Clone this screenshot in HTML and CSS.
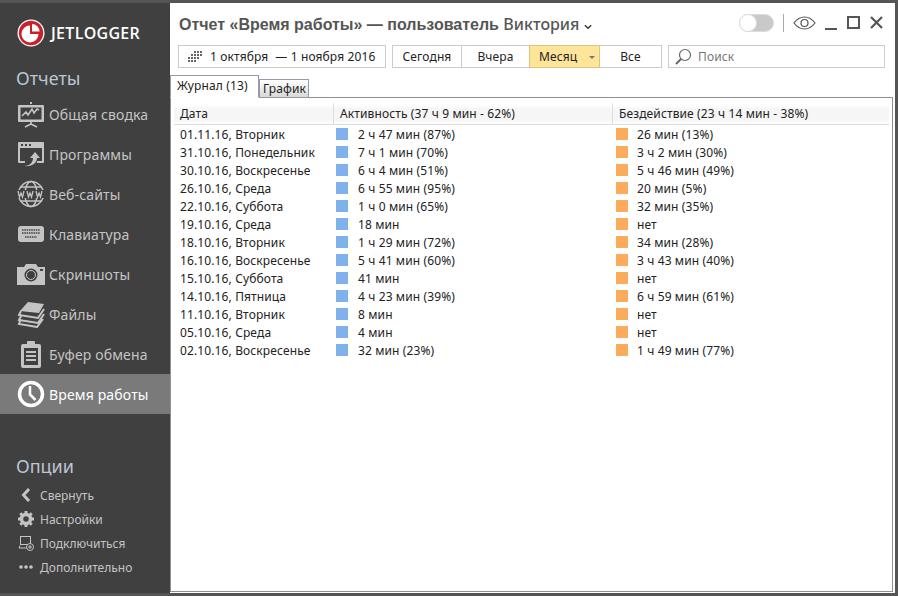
FILE: index.html
```html
<!DOCTYPE html>
<html lang="ru">
<head>
<meta charset="utf-8">
<title>JetLogger</title>
<link rel="stylesheet" href="styles.css">
</head>
<body>
<div class="app">
  <aside class="side">
    <div class="logo">
      <svg class="logo-mark" viewBox="0 0 28 28" width="28" height="28"><circle cx="14" cy="14" r="13.500" fill="#fff"/><circle cx="14" cy="14" r="12.200" fill="#c8202c"/><path d="M13 6.500v8.500h8.500a8.500 8.500 0 1 1-8.500-8.500z" fill="#fff"/><path d="M15 5v7.500h7.500A7.500 7.500 0 0 0 15 5z" fill="#fff"/></svg>
      <span class="logo-text">JETLOGGER</span>
    </div>
    <h2 class="side-h">Отчеты</h2>
    <nav class="nav">
      <a class="nav-item"><svg viewBox="0 0 28 28" width="28" height="28"><path d="M13 2h2v2h-2zM2 5h24a1 1 0 0 1 1 1v15a1 1 0 0 1-1 1H2a1 1 0 0 1-1-1V6a1 1 0 0 1 1-1z" fill="#c4c4c4"/><rect x="3.500" y="7.500" width="21" height="12" fill="#404040"/><path d="M5 16l4-4 2 3 4-6 2 4 3-4 2 1" stroke="#c4c4c4" stroke-width="1.600" fill="none"/><path d="M14 22v3M14 24l-6 3M14 24l6 3" stroke="#c4c4c4" stroke-width="1.600" fill="none"/></svg><span>Общая сводка</span></a>
      <a class="nav-item"><svg viewBox="0 0 28 28" width="28" height="28"><path d="M2 2h24a1 1 0 0 1 1 1v19a1 1 0 0 1-1 1h-6v-2h5V8H3v13h5v2H2a1 1 0 0 1-1-1V3a1 1 0 0 1 1-1z" fill="#c4c4c4"/><path d="M4 4h2v2H4zM8 4h2v2H8zM12 4h2v2h-2z" fill="#404040"/><path d="M7 26c5 0 9-3 9-8h-3l5-6 5 6h-3c0 5-5 9-13 8z" fill="#c4c4c4"/></svg><span>Программы</span></a>
      <a class="nav-item"><svg viewBox="0 0 28 28" width="28" height="28"><circle cx="14" cy="14" r="12.500" fill="none" stroke="#c4c4c4" stroke-width="1.500"/><ellipse cx="14" cy="14" rx="6" ry="12.500" fill="none" stroke="#c4c4c4" stroke-width="1.500"/><path d="M3 7h22M3 21h22" stroke="#c4c4c4" stroke-width="1.500"/><rect x="0" y="10" width="28" height="8" fill="#404040"/><path d="M1 11l1.500 6 1.500-4 1.500 4 1.500-6M10 11l1.500 6 1.500-4 1.500 4 1.500-6M19 11l1.500 6 1.500-4 1.500 4 1.500-6" fill="none" stroke="#c4c4c4" stroke-width="1.300"/></svg><span>Веб-сайты</span></a>
      <a class="nav-item"><svg viewBox="0 0 28 28" width="28" height="28"><rect x="1" y="6" width="26" height="16" rx="3" fill="#c4c4c4"/><path d="M5 10h18M5 13h18M8 17h12" stroke="#404040" stroke-width="1.500" stroke-dasharray="1.500 .8"/></svg><span>Клавиатура</span></a>
      <a class="nav-item"><svg viewBox="0 0 28 28" width="28" height="28"><path d="M0 7h7l2-3h10l2 3h7v18H0z" fill="#c4c4c4"/><circle cx="14" cy="15" r="6.500" fill="#404040"/><circle cx="14" cy="15" r="4.500" fill="none" stroke="#c4c4c4"/><rect x="23" y="9" width="3" height="2" fill="#404040"/></svg><span>Скриншоты</span></a>
      <a class="nav-item"><svg viewBox="0 0 28 28" width="28" height="28"><path d="M11 2l16 2-5 9-19-2z" fill="#c4c4c4"/><path d="M4 11l-2 4 19 3 6-9M4 16l-2 4 19 3 6-9M3 21l-1 3 18 3 6-8" fill="none" stroke="#c4c4c4" stroke-width="2"/></svg><span>Файлы</span></a>
      <a class="nav-item"><svg viewBox="0 0 28 28" width="28" height="28"><path d="M6 4h4V2a1 1 0 0 1 1-1h6a1 1 0 0 1 1 1v2h4a2 2 0 0 1 2 2v20a2 2 0 0 1-2 2H6a2 2 0 0 1-2-2V6a2 2 0 0 1 2-2z" fill="#c4c4c4"/><rect x="7" y="8" width="14" height="17" fill="#404040"/><path d="M9 12h10M9 16h10M9 20h10" stroke="#c4c4c4" stroke-width="2"/></svg><span>Буфер обмена</span></a>
      <a class="nav-item active"><svg viewBox="0 0 28 28" width="28" height="28"><circle cx="14" cy="14" r="11.500" fill="none" stroke="#fff" stroke-width="3.500"/><path d="M13 6v8.500l5.500 5.500" fill="none" stroke="#fff" stroke-width="2.500"/></svg><span>Время работы</span></a>
    </nav>
    <h2 class="side-h opts">Опции</h2>
    <div class="opt-list">
      <a class="opt"><svg viewBox="0 0 16 16" width="16" height="16"><path d="M11 2L5.500 8l5.500 6" fill="none" stroke="#c4c4c4" stroke-width="3"/></svg><span>Свернуть</span></a>
      <a class="opt"><svg viewBox="0 0 16 16" width="16" height="16"><circle cx="8" cy="8" r="4.500" fill="none" stroke="#c4c4c4" stroke-width="3.500"/><path d="M8 0v3M8 13v3M0 8h3M13 8h3M2.300 2.300l2 2M11.700 11.700l2 2M13.700 2.300l-2 2M4.300 11.700l-2 2" stroke="#c4c4c4" stroke-width="3"/></svg><span>Настройки</span></a>
      <a class="opt"><svg viewBox="0 0 16 16" width="16" height="16"><rect x="2.500" y="1.500" width="10" height="8" fill="none" stroke="#c4c4c4"/><path d="M1 13h8M2 10.500l-1 2.500" stroke="#c4c4c4"/><circle cx="12" cy="12" r="3.500" fill="#404040" stroke="#c4c4c4"/><path d="M10 12h4M12 10v4" stroke="#c4c4c4"/></svg><span>Подключиться</span></a>
      <a class="opt"><svg viewBox="0 0 16 16" width="16" height="16"><circle cx="3" cy="8" r="1.800" fill="#c4c4c4"/><circle cx="8" cy="8" r="1.800" fill="#c4c4c4"/><circle cx="13" cy="8" r="1.800" fill="#c4c4c4"/></svg><span>Дополнительно</span></a>
    </div>
  </aside>

  <main class="main">
    <header class="top">
      <h1 class="title">Отчет «Время работы» — пользователь <span class="user">Виктория</span><svg class="chev" viewBox="0 0 10 6" width="9" height="6"><path d="M1 1l3.500 3.500L8 1" fill="none" stroke="#333" stroke-width="1.500"/></svg></h1>
      <div class="win">
        <span class="toggle"><span class="knob"></span></span>
        <span class="sep"></span>
        <svg class="eye" viewBox="0 0 23 14" width="23" height="14"><path d="M1 7c3-4 6-6 10.500-6S19 3 22 7c-3 4-6 6-10.500 6S4 11 1 7z" fill="none" stroke="#555" stroke-width="1.200"/><circle cx="11.500" cy="7" r="3.500" fill="none" stroke="#555" stroke-width="1.200"/></svg>
        <svg class="w-min" viewBox="0 0 12 14" width="12" height="14"><path d="M0 13h12" stroke="#555" stroke-width="2"/></svg>
        <svg viewBox="0 0 13 13" width="13" height="13"><rect x="1" y="1" width="11" height="11" fill="none" stroke="#555" stroke-width="2"/></svg>
        <svg viewBox="0 0 13 13" width="13" height="13"><path d="M1 1l11 11M12 1L1 12" stroke="#555" stroke-width="2.200"/></svg>
      </div>
    </header>
    <div class="tools">
      <div class="box dates">
        <svg viewBox="0 0 15 11" width="15" height="11"><path d="M6 0h2v2H6zM9 0h2v2H9zM12 0h2v2h-2zM3 3h2v2H3zM6 3h2v2H6zM9 3h2v2H9zM12 3h2v2h-2zM0 6h2v2H0zM3 6h2v2H3zM6 6h2v2H6zM9 6h2v2H9zM0 9h2v2H0zM3 9h2v2H3zM6 9h2v2H6z" fill="#666"/></svg>
        <span>1 октября</span><span class="dash">— 1 ноября 2016</span>
      </div>
      <div class="seg">
        <span class="seg-b s1">Сегодня</span>
        <span class="seg-b s2">Вчера</span>
        <span class="seg-b s3 on">Месяц<i class="arr"></i></span>
        <span class="seg-b s4">Все</span>
      </div>
      <div class="box search">
        <svg viewBox="0 0 18 18" width="18" height="18"><circle cx="11" cy="7" r="5.500" fill="none" stroke="#666" stroke-width="1.200"/><path d="M7 11l-5 5" stroke="#666" stroke-width="2"/></svg>
        <span>Поиск</span>
      </div>
    </div>
    <div class="tabs">
      <span class="tab cur">Журнал (13)</span>
      <span class="tab">График</span>
    </div>
    <section class="panel">
      <div class="row head">
        <div class="c1">Дата</div>
        <div class="c2">Активность (37 ч 9 мин - 62%)</div>
        <div class="c3">Бездействие (23 ч 14 мин - 38%)</div>
      </div>
      <div class="rows">
        <div class="row"><div class="c1">01.11.16, Вторник</div><div class="c2"><i class="sw b"></i>2 ч 47 мин (87%)</div><div class="c3"><i class="sw o"></i>26 мин (13%)</div></div>
        <div class="row"><div class="c1">31.10.16, Понедельник</div><div class="c2"><i class="sw b"></i>7 ч 1 мин (70%)</div><div class="c3"><i class="sw o"></i>3 ч 2 мин (30%)</div></div>
        <div class="row"><div class="c1">30.10.16, Воскресенье</div><div class="c2"><i class="sw b"></i>6 ч 4 мин (51%)</div><div class="c3"><i class="sw o"></i>5 ч 46 мин (49%)</div></div>
        <div class="row"><div class="c1">26.10.16, Среда</div><div class="c2"><i class="sw b"></i>6 ч 55 мин (95%)</div><div class="c3"><i class="sw o"></i>20 мин (5%)</div></div>
        <div class="row"><div class="c1">22.10.16, Суббота</div><div class="c2"><i class="sw b"></i>1 ч 0 мин (65%)</div><div class="c3"><i class="sw o"></i>32 мин (35%)</div></div>
        <div class="row"><div class="c1">19.10.16, Среда</div><div class="c2"><i class="sw b"></i>18 мин</div><div class="c3"><i class="sw o"></i>нет</div></div>
        <div class="row"><div class="c1">18.10.16, Вторник</div><div class="c2"><i class="sw b"></i>1 ч 29 мин (72%)</div><div class="c3"><i class="sw o"></i>34 мин (28%)</div></div>
        <div class="row"><div class="c1">16.10.16, Воскресенье</div><div class="c2"><i class="sw b"></i>5 ч 41 мин (60%)</div><div class="c3"><i class="sw o"></i>3 ч 43 мин (40%)</div></div>
        <div class="row"><div class="c1">15.10.16, Суббота</div><div class="c2"><i class="sw b"></i>41 мин</div><div class="c3"><i class="sw o"></i>нет</div></div>
        <div class="row"><div class="c1">14.10.16, Пятница</div><div class="c2"><i class="sw b"></i>4 ч 23 мин (39%)</div><div class="c3"><i class="sw o"></i>6 ч 59 мин (61%)</div></div>
        <div class="row"><div class="c1">11.10.16, Вторник</div><div class="c2"><i class="sw b"></i>8 мин</div><div class="c3"><i class="sw o"></i>нет</div></div>
        <div class="row"><div class="c1">05.10.16, Среда</div><div class="c2"><i class="sw b"></i>4 мин</div><div class="c3"><i class="sw o"></i>нет</div></div>
        <div class="row"><div class="c1">02.10.16, Воскресенье</div><div class="c2"><i class="sw b"></i>32 мин (23%)</div><div class="c3"><i class="sw o"></i>1 ч 49 мин (77%)</div></div>
      </div>
    </section>
  </main>
</div>
</body>
</html>
```
FILE: styles.css
```css
* { box-sizing: border-box; }
html, body { margin: 0; height: 100%; }
body { background: #555; font-family: "Noto Sans", "Open Sans", sans-serif; font-size: 12px; letter-spacing: .12px; color: #222; overflow: hidden; }
.app { display: flex; width: 898px; height: 596px; border: solid #555; border-width: 3px 3px 3px 0; background: #404040; }

.side { width: 170px; flex: none; display: flex; flex-direction: column; padding-top: 16px; color: #c4c4c4; }
.logo { display: flex; align-items: center; gap: 6px; padding-left: 17px; height: 28px; }
.logo-mark { flex: none; }
.logo-text { color: #fff; font-family: "Open Sans", sans-serif; font-size: 16px; font-weight: 600; letter-spacing: .3px; }
.side-h { margin: 19px 0 0 16px; font-size: 18px; font-weight: 400; line-height: 24px; letter-spacing: 0; color: #bcc6d0; }
.nav { margin-top: 4px; display: flex; flex-direction: column; }
.nav-item { display: flex; align-items: center; height: 40px; padding-left: 17px; gap: 4px; font-size: 14px; letter-spacing: .15px; color: #c4c4c4; }
.nav-item svg { flex: none; }
.nav-item.active { background: #7a7a7a; color: #fff; }
.opts { margin-top: 40px; }
.opt-list { margin-top: 5px; display: flex; flex-direction: column; }
.opt { display: flex; align-items: center; height: 24px; padding-left: 18px; gap: 6px; font-size: 12px; letter-spacing: 0; color: #c4c4c4; }
.opt svg { flex: none; }

.main { flex: 1; min-width: 0; background: #fff; display: flex; flex-direction: column; padding: 0 2px 1px 0; }
.top { display: flex; justify-content: space-between; align-items: center; height: 31px; margin-top: 5px; padding: 0 10px 0 9px; }
.title { margin: 0; font-family: "Liberation Sans", sans-serif; font-size: 16px; font-weight: 700; letter-spacing: 0; color: #555; white-space: pre-wrap; display: block; }
.user { font-family: "Noto Sans", sans-serif; font-weight: 500; font-size: 16px; }
.chev { margin-left: 5px; }
.win { display: flex; align-items: center; gap: 10px; margin-top: -2px; }
.toggle { width: 35px; height: 18px; border-radius: 9px; background: #c9c9c9; border: 1px solid #ddd; display: block; position: relative; margin-right: -1px; }
.knob { position: absolute; left: -1px; top: -1px; width: 18px; height: 18px; border-radius: 50%; background: #fff; border: 1px solid #ddd; }
.sep { width: 1px; height: 18px; background: #aaa; margin: 0; }
.eye { margin-right: -1px; margin-left: -1px; }

.tools { display: flex; gap: 6px; margin-top: 6px; padding: 0 8px; height: 23px; }
.box { display: flex; align-items: center; border: 1px solid #ccc; }
.dates { width: 208px; padding-left: 9px; gap: 7px; color: #222; }
.dash { margin-left: 0; }
.seg { display: flex; height: 23px; }
.seg-b { display: flex; align-items: center; justify-content: center; height: 23px; border: 1px solid #ccc; margin-left: -1px; color: #222; }
.s1 { width: 70px; margin-left: 0; }
.s2 { width: 69px; }
.s3 { width: 71px; justify-content: flex-start; padding-left: 9px; gap: 8px; }
.s4 { width: 63px; }
.on { background: #ffe59a; border-color: #dcc67e; position: relative; }
.arr { width: 0; height: 0; border: 3px solid transparent; border-top-color: #777; margin-top: 4px; margin-left: 4px; }
.search { flex: 1; padding-left: 5px; gap: 6px; color: #777; }

.tabs { display: flex; align-items: flex-end; height: 24px; margin-top: 6px; position: relative; z-index: 1; margin-bottom: -1px; }
.tab { display: block; height: 19px; padding: 0 3px; line-height: 18px; border: 1px solid #99a; border-bottom: 1px solid #999; background: linear-gradient(#fff, #d8d8d8); }
.tab.cur { height: 23px; width: 89px; padding-left: 6px; line-height: 20px; background: #fff; border-bottom-color: #fff; }
.tab:not(.cur) { width: 50px; margin-left: 0; padding-left: 3px; }

.panel { flex: 1; border: 1px solid #909090; padding: 0 3px; min-height: 0; }
.row { display: grid; grid-template-columns: 159px 279px 1fr; height: 18px; align-items: center; }
.head { height: 27px; background: linear-gradient(#fff 30%, #f6f6f6 40%, #f6f6f6 85%, #fff); border-bottom: 1px solid #ddd; padding-top: 5px; }
.head > div + div { border-left: 1px solid #ddd; height: 100%; display: flex; align-items: center; }
.c1 { padding-left: 6px; white-space: nowrap; }
.c2, .c3 { padding-left: 6px; white-space: nowrap; display: flex; align-items: center; }
.row:not(.head) .c2 { padding-left: 3px; }
.row:not(.head) .c3 { padding-left: 4px; }
.sw { display: block; width: 12px; height: 12px; margin-right: 10px; flex: none; }
.c3 .sw { margin-right: 9px; }
.b { background: #7fb2ea; }
.o { background: #fbab5c; }
```
